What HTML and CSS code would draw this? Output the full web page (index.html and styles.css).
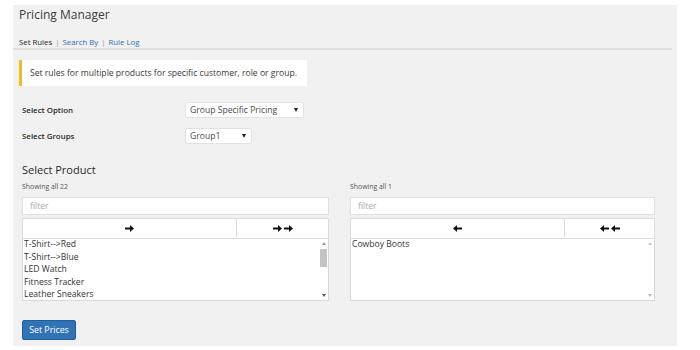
FILE: index.html
```html
<!DOCTYPE html>
<html lang="en">

<head>
    <meta charset="UTF-8">
    <title>Pricing Manager</title>
    <link rel="stylesheet" href="styles.css">
</head>

<body>
    <div class="wrap">
        <h1 class="page-title">Pricing Manager</h1>
        <div class="tabs">
            <span class="tab current">Set Rules</span>
            <span class="sep">|</span>
            <a class="tab" href="#">Search By</a>
            <span class="sep">|</span>
            <a class="tab" href="#">Rule Log</a>
        </div>
        <div class="notice">Set rules for multiple products for specific customer, role or group.</div>

        <div class="form">
            <div class="form-row">
                <label class="form-label">Select Option</label>
                <div class="fake-select wide">Group Specific Pricing<span class="caret"></span></div>
            </div>
            <div class="form-row">
                <label class="form-label">Select Groups</label>
                <div class="fake-select narrow">Group1<span class="caret"></span></div>
            </div>

            <h2 class="section-title">Select Product</h2>

            <div class="picker">
                <div class="picker-col">
                    <div class="count">Showing all 22</div>
                    <div class="filter">filter</div>
                    <div class="move-btns">
                        <button class="move one">
                            <svg width="9" height="7" viewBox="0 0 9 7"><path d="M0 2.5h5V0l4 3.5-4 3.5V4.5H0z" /></svg>
                        </button>
                        <button class="move all">
                            <svg width="9" height="7" viewBox="0 0 9 7"><path d="M0 2.5h5V0l4 3.5-4 3.5V4.5H0z" /></svg>
                            <svg width="9" height="7" viewBox="0 0 9 7"><path d="M0 2.5h5V0l4 3.5-4 3.5V4.5H0z" /></svg>
                        </button>
                    </div>
                    <div class="listbox">
                        <ul class="items">
                            <li>T-Shirt--&gt;Red</li>
                            <li>T-Shirt--&gt;Blue</li>
                            <li>LED Watch</li>
                            <li>Fitness Tracker</li>
                            <li>Leather Sneakers</li>
                        </ul>
                        <div class="scrollbar">
                            <span class="sb-up"></span>
                            <span class="sb-track"><span class="sb-thumb"></span></span>
                            <span class="sb-down"></span>
                        </div>
                    </div>
                </div>

                <div class="picker-col">
                    <div class="count">Showing all 1</div>
                    <div class="filter">filter</div>
                    <div class="move-btns">
                        <button class="move one">
                            <svg width="9" height="7" viewBox="0 0 9 7"><path d="M9 2.5H4V0L0 3.5 4 7V4.5h5z" /></svg>
                        </button>
                        <button class="move all">
                            <svg width="9" height="7" viewBox="0 0 9 7"><path d="M9 2.5H4V0L0 3.5 4 7V4.5h5z" /></svg>
                            <svg width="9" height="7" viewBox="0 0 9 7"><path d="M9 2.5H4V0L0 3.5 4 7V4.5h5z" /></svg>
                        </button>
                    </div>
                    <div class="listbox">
                        <ul class="items">
                            <li>Cowboy Boots</li>
                        </ul>
                        <div class="scrollbar disabled">
                            <span class="sb-up"></span>
                            <span class="sb-track"></span>
                            <span class="sb-down"></span>
                        </div>
                    </div>
                </div>
            </div>

            <button class="btn-primary">Set Prices</button>
        </div>
    </div>
</body>

</html>
```

FILE: styles.css
```css
body {
    margin: 0;
    background-color: #fff;
    font-family: 'Open Sans', 'Liberation Sans', sans-serif;
    color: #444;
}

.wrap {
    background-color: #f1f1f1;
    margin: 5px 23px 0 13px;
    height: 341px;
    padding: 0 5px 0 6px;
    box-sizing: border-box;
}

.page-title {
    margin: 0;
    padding-top: 2px;
    font-size: 12px;
    line-height: 16px;
    font-weight: 400;
    color: #3c3c3c;
}

.tabs {
    margin: 14px 0 0 -6px;
    padding: 0 0 1px 6px;
    font-size: 7.8px;
    line-height: 10px;
    border-bottom: 2px solid #dedede;
    white-space: nowrap;
}

.tab {
    color: #2e6fad;
    text-decoration: none;
}

.tab.current {
    color: #1d1d1d;
}

.sep {
    color: #7a9cc0;
    margin: 0 1px;
}

.notice {
    margin-top: 10px;
    width: 288px;
    box-sizing: border-box;
    background-color: #fff;
    border-left: 3px solid #f3bb22;
    padding: 7px 8px;
    font-size: 8.6px;
    line-height: 12px;
    color: #3a3a3a;
    white-space: nowrap;
}

.form {
    padding-left: 3px;
}

.form-row {
    display: flex;
    align-items: center;
    margin-top: 10px;
}

.form-row:first-child {
    margin-top: 16px;
}

.form-label {
    width: 163px;
    font-size: 7.9px;
    font-weight: 600;
    color: #2a2a2a;
}

.fake-select {
    position: relative;
    height: 16px;
    box-sizing: border-box;
    background-color: #fff;
    border: 1px solid #e2e2e2;
    border-radius: 2px;
    padding-left: 4px;
    font-size: 8.6px;
    line-height: 14px;
    color: #4a4a4a;
}

.fake-select.wide {
    width: 119px;
}

.fake-select.narrow {
    width: 67px;
}

.caret {
    position: absolute;
    right: 5px;
    top: 5px;
    border-left: 2px solid transparent;
    border-right: 2px solid transparent;
    border-top: 4px solid #222;
}

.section-title {
    margin: 19px 0 0;
    font-size: 11px;
    line-height: 14px;
    font-weight: 400;
    color: #2a2a2a;
}

.picker {
    display: flex;
    gap: 21px;
    margin-top: 5px;
}

.picker-col {
    width: 307px;
}

.picker-col + .picker-col {
    width: 305px;
}

.count {
    font-size: 6.9px;
    line-height: 10px;
    color: #555;
}

.filter {
    margin-top: 5px;
    height: 18px;
    box-sizing: border-box;
    background-color: #fff;
    border: 1px solid #e0e0e0;
    padding-left: 7px;
    font-size: 8.6px;
    line-height: 16px;
    color: #aaa;
}

.move-btns {
    display: flex;
    margin-top: 3px;
}

.move {
    height: 21px;
    background-color: #fff;
    border: 1px solid #dcdcdc;
    padding: 0;
    display: flex;
    justify-content: center;
    align-items: center;
    gap: 2px;
}

.move.one {
    width: 215px;
}

.move.all {
    flex: 1;
    border-left: none;
}

.move svg {
    fill: #111;
}

.listbox {
    display: flex;
    height: 62px;
    box-sizing: border-box;
    background-color: #fff;
    border: 1px solid #d8d8d8;
    border-top: none;
}

.items {
    flex: 1;
    list-style: none;
    margin: -1px 0 0;
    padding: 0 1px;
    font-size: 8.6px;
    line-height: 12.5px;
    color: #333;
}

.scrollbar {
    width: 9px;
    display: flex;
    flex-direction: column;
    align-items: center;
}

.sb-up,
.sb-down {
    width: 0;
    height: 0;
    border-left: 2px solid transparent;
    border-right: 2px solid transparent;
    margin: 3px 0;
}

.sb-up {
    border-bottom: 3px solid #9a9a9a;
}

.sb-down {
    border-top: 3px solid #555;
}

.sb-track {
    flex: 1;
    width: 7px;
}

.sb-thumb {
    display: block;
    width: 7px;
    height: 18px;
    margin-top: 1px;
    background-color: #c3c3c3;
}

.scrollbar.disabled .sb-up {
    border-bottom-color: #c8c8c8;
}

.scrollbar.disabled .sb-down {
    border-top-color: #b5b5b5;
}

.btn-primary {
    margin-top: 19px;
    width: 54px;
    height: 20px;
    padding: 0;
    background-color: #3174b6;
    border: 1px solid #1f5f9b;
    border-radius: 2px;
    color: #fff;
    font-family: inherit;
    font-size: 8.8px;
}
```
